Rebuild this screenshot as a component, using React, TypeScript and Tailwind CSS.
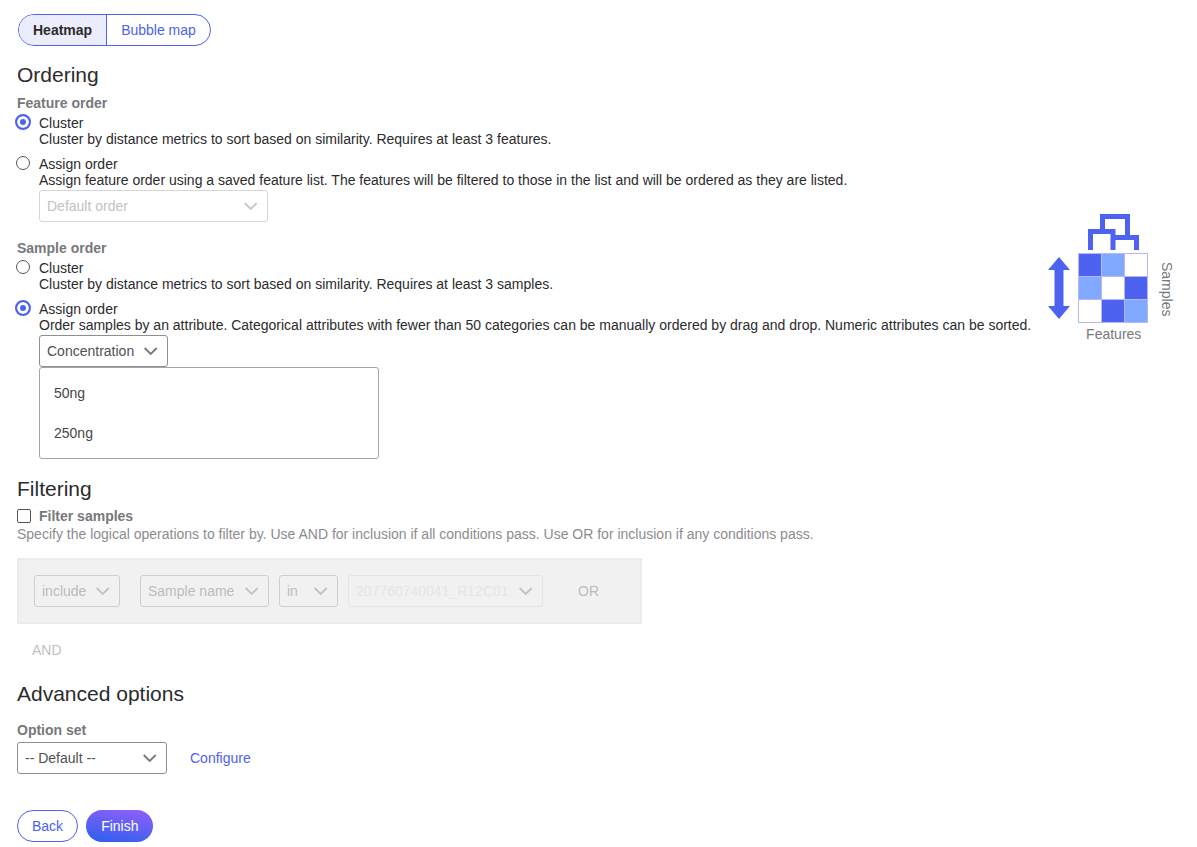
import React, { useState } from 'react';
import clsx from 'clsx';

type SelectProps = {
  id: string;
  label: string;
  options: string[];
  className: string;
  chevronClass?: string;
  disabled?: boolean;
};

const Select = ({ id, label, options, className, chevronClass = 'text-[#77787b]', disabled }: SelectProps) => (
  <div className="relative w-fit">
    <select
      id={id}
      aria-label={label}
      disabled={disabled}
      className={clsx('block h-8 appearance-none rounded-[3px] border bg-transparent pl-[7px] pr-7', className)}
    >
      {options.map((option) => (
        <option key={option}>{option}</option>
      ))}
    </select>
    <svg
      className={clsx('pointer-events-none absolute right-2.5 top-3 h-2 w-3.5', chevronClass)}
      viewBox="0 0 14 8"
      fill="none"
      stroke="currentColor"
      strokeWidth="1.8"
    >
      <path d="M0.7 1l6 6 6-6" />
    </svg>
  </div>
);

type RadioProps = {
  name: string;
  value: string;
  label: string;
  description: string;
  selected: string;
  onSelect: (value: string) => void;
  children?: React.ReactNode;
};

const RadioOption = ({ name, value, label, description, selected, onSelect, children }: RadioProps) => (
  <div>
    <label className="-ml-0.5 flex w-fit items-start gap-2">
      <input
        type="radio"
        name={name}
        value={value}
        checked={selected === value}
        onChange={() => onSelect(value)}
        className="m-px size-3.5 shrink-0 appearance-none rounded-full border border-[#555] checked:m-0 checked:size-4 checked:border-2 checked:border-[#4d62ee] checked:bg-[#4d62ee] checked:shadow-[inset_0_0_0_3px_white]"
      />
      <span className="pt-px">{label}</span>
    </label>
    <div className="pl-[22px]">
      <p>{description}</p>
      {children}
    </div>
  </div>
);

const cells = [
  ['#4d62ee', '#80a9ff', '#fff'],
  ['#80a9ff', '#fff', '#4d62ee'],
  ['#fff', '#4d62ee', '#80a9ff'],
];

const OrderDiagram = () => (
  <div className="flex shrink-0 items-start gap-2.5 pt-0.5 text-[#77787b]">
    <div>
      <svg width="101" height="110" viewBox="0 0 101 110" aria-hidden="true">
        <path d="M11 43L22 56H15.5V92H22L11 105L0 92H6.5V56H0Z" fill="#4d62ee" />
        <g fill="none" stroke="#4d62ee" strokeWidth="5">
          <path d="M54.5 17V2.5H79.5V24" />
          <path d="M42.5 36V17.5H65V36" />
          <path d="M65 23.5H88.5V36" />
        </g>
        {cells.map((row, y) =>
          row.map((fill, x) => (
            <rect
              key={`${x}-${y}`}
              x={30.5 + x * 23}
              y={39.5 + y * 23}
              width="23"
              height="23"
              fill={fill}
              stroke="#b4b9f4"
            />
          ))
        )}
      </svg>
      <p className="mt-0.5 pl-[30px] text-center">Features</p>
    </div>
    <span className="mt-12 [writing-mode:vertical-rl]">Samples</span>
  </div>
);

const App = () => {
  const [view, setView] = useState('Heatmap');
  const [featureOrder, setFeatureOrder] = useState('cluster');
  const [sampleOrder, setSampleOrder] = useState('assign');

  return (
    <main className="bg-white px-[17px] pt-3.5 pb-1 font-['Liberation_Sans',Arial,sans-serif] text-sm leading-4 text-[#2b2b2d]">
      <div className="ml-px flex w-fit overflow-hidden rounded-full border border-[#4d62ee]">
        {['Heatmap', 'Bubble map'].map((tab) => (
          <button
            key={tab}
            type="button"
            aria-pressed={view === tab}
            onClick={() => setView(tab)}
            className={clsx(
              'h-[30px] px-3.5 not-first:border-l not-first:border-[#4d62ee]',
              view === tab ? 'bg-[#ebedfc] font-bold' : 'text-[#4d62ee]'
            )}
          >
            {tab}
          </button>
        ))}
      </div>

      <h2 className="mt-[17px] text-[21px] leading-6">Ordering</h2>
      <div className="mt-2 flex items-center gap-[17px]">
        <div>
          <fieldset>
            <legend className="font-bold text-[#77787b]">Feature order</legend>
            <div className="mt-[3px] flex flex-col gap-2">
              <RadioOption
                name="feature-order"
                value="cluster"
                label="Cluster"
                description="Cluster by distance metrics to sort based on similarity. Requires at least 3 features."
                selected={featureOrder}
                onSelect={setFeatureOrder}
              />
              <RadioOption
                name="feature-order"
                value="assign"
                label="Assign order"
                description="Assign feature order using a saved feature list. The features will be filtered to those in the list and will be ordered as they are listed."
                selected={featureOrder}
                onSelect={setFeatureOrder}
              >
                <div className="mt-0.5">
                  <Select
                    id="feature-list"
                    label="Feature list"
                    options={['Default order']}
                    className="w-[229px] border-[#d6d6d6] text-[#c2c2c2]"
                    chevronClass="text-[#c8c8c8]"
                    disabled
                  />
                </div>
              </RadioOption>
            </div>
          </fieldset>

          <fieldset className="mt-[18px]">
            <legend className="font-bold text-[#77787b]">Sample order</legend>
            <div className="mt-[3px] flex flex-col gap-2">
              <RadioOption
                name="sample-order"
                value="cluster"
                label="Cluster"
                description="Cluster by distance metrics to sort based on similarity. Requires at least 3 samples."
                selected={sampleOrder}
                onSelect={setSampleOrder}
              />
              <RadioOption
                name="sample-order"
                value="assign"
                label="Assign order"
                description="Order samples by an attribute. Categorical attributes with fewer than 50 categories can be manually ordered by drag and drop. Numeric attributes can be sorted."
                selected={sampleOrder}
                onSelect={setSampleOrder}
              >
                <div className="mt-0.5">
                  <Select
                    id="attribute"
                    label="Attribute"
                    options={['Concentration']}
                    className="w-[129px] border-[#8e8f92] text-[#505154]"
                  />
                </div>
                <ul className="w-[340px] rounded-[3px] border border-[#a5a5a7] px-3.5 py-[5px] text-[#444548]">
                  <li className="py-3">50ng</li>
                  <li className="py-3">250ng</li>
                </ul>
              </RadioOption>
            </div>
          </fieldset>
        </div>
        <OrderDiagram />
      </div>

      <h2 className="mt-[18px] text-[21px] leading-6">Filtering</h2>
      <label className="mt-[7px] flex w-fit items-center gap-2 font-bold text-[#77787b]">
        <input
          type="checkbox"
          className="size-3.5 appearance-none rounded-[2px] border border-[#555] checked:bg-[#4d62ee]"
        />
        Filter samples
      </label>
      <p className="mt-0.5 text-[#8c8c8f]">
        Specify the logical operations to filter by. Use AND for inclusion if all conditions pass. Use OR for inclusion if
        any conditions pass.
      </p>

      <div className="mt-4 flex w-fit items-center border-2 border-[#ebebeb] bg-[#f1f1f1] py-[15px] pl-[15px] pr-[26px] text-[#bcbcbc]">
        <Select
          id="mode"
          label="Filter mode"
          options={['include']}
          className="w-[86px] border-[#cfcfcf]"
          chevronClass="text-[#c2c2c2]"
          disabled
        />
        <div className="ml-5 flex gap-2.5">
          <Select
            id="field"
            label="Filter field"
            options={['Sample name']}
            className="w-[129px] border-[#cfcfcf]"
            chevronClass="text-[#c2c2c2]"
            disabled
          />
          <Select
            id="operator"
            label="Operator"
            options={['in']}
            className="w-[59px] border-[#cfcfcf]"
            chevronClass="text-[#c2c2c2]"
            disabled
          />
          <Select
            id="samples"
            label="Samples"
            options={['207760740041_R12C01']}
            className="w-[195px] border-[#e5e5e5] text-[#e5e5e5]"
            chevronClass="text-[#c2c2c2]"
            disabled
          />
        </div>
        <button type="button" disabled className="ml-5 px-[15px]">
          OR
        </button>
      </div>
      <button type="button" disabled className="mt-[18px] block px-[15px] text-[#bfbfbf]">
        AND
      </button>

      <h2 className="mt-6 text-[21px] leading-6">Advanced options</h2>
      <label htmlFor="option-set" className="mt-4 block font-bold text-[#77787b]">
        Option set
      </label>
      <div className="mt-1 flex items-center gap-[23px]">
        <Select
          id="option-set"
          label="Option set"
          options={['-- Default --']}
          className="w-[150px] border-[#8e8f92] text-[#505154]"
        />
        <a href="#configure" className="text-[#4d62ee]">
          Configure
        </a>
      </div>

      <div className="mt-9 flex gap-2">
        <button type="button" className="h-8 rounded-full border border-[#4d62ee] px-3.5 text-[#4d62ee]">
          Back
        </button>
        <button
          type="button"
          className="h-8 rounded-full bg-linear-[10deg] from-[#2a5fec] to-[#9460fb] px-[15px] text-white"
        >
          Finish
        </button>
      </div>
    </main>
  );
};

export default App;
